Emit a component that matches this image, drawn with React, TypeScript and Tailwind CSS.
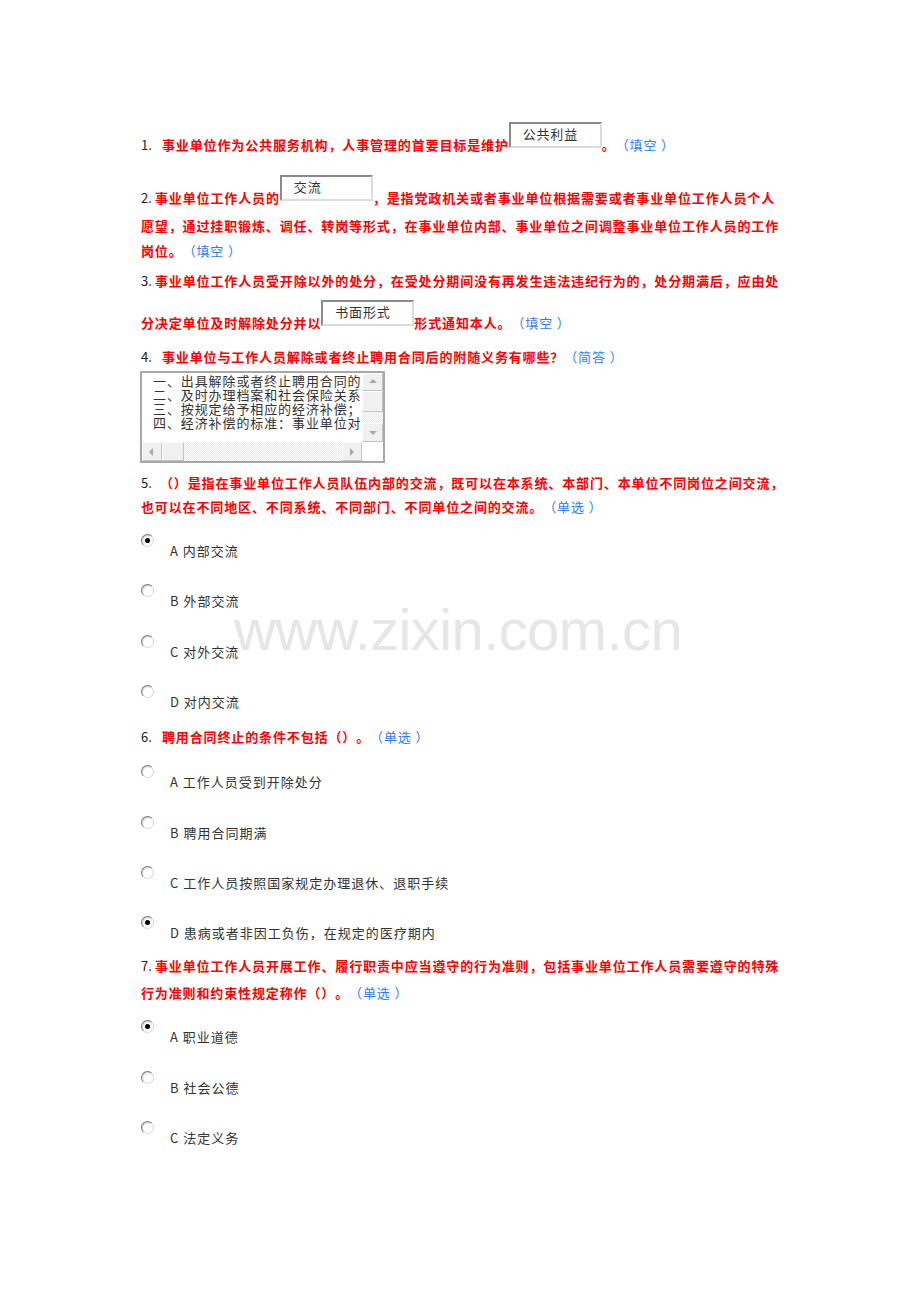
import React from "react";

const FONT = { fontFamily: '"Noto Sans CJK SC", "Liberation Sans", sans-serif' };

function Box({ text }: { text: string }) {
  return (
    <div className="w-[93px] h-[26px] mb-[4px] shrink-0 border-2 border-t-[#8a8a8a] border-l-[#8a8a8a] border-b-[#dcdcdc] border-r-[#dcdcdc] bg-white pl-[12px] pt-[2px] text-[13px] leading-[16px] font-normal text-[#333] tracking-[0.8px] whitespace-nowrap overflow-hidden">
      {text}
    </div>
  );
}

function Red({ children }: { children: React.ReactNode }) {
  return <span className="text-[#ff0000] font-bold">{children}</span>;
}

function Blue({ children }: { children: React.ReactNode }) {
  return <span className="text-[#2f7cf6] font-normal">{children}</span>;
}

function Num({ n, wide }: { n: string; wide?: boolean }) {
  return (
    <span className={wide ? "inline-block w-[21px] text-[#222] tracking-normal" : "inline-block w-[14px] text-[#222] tracking-normal"}>
      {n}
    </span>
  );
}

function Radio({ checked, label, className }: { checked?: boolean; label: string; className: string }) {
  return (
    <div className={"flex items-start h-[24px] " + className}>
      <div className="w-[13px] h-[13px] rounded-full border border-t-[#7a7a7a] border-l-[#7a7a7a] border-b-[#d8d8d8] border-r-[#d8d8d8] bg-white shadow-[inset_1px_1px_1px_rgba(0,0,0,0.18)] flex items-center justify-center shrink-0">
        {checked ? <div className="w-[5px] h-[5px] rounded-full bg-black" /> : null}
      </div>
      <div className="ml-[16px] mt-[10px] text-[13px] leading-[14px] text-[#333] tracking-[1px] whitespace-nowrap">
        {label}
      </div>
    </div>
  );
}

function Arrow({ dir }: { dir: "up" | "down" | "left" | "right" }) {
  const pts =
    dir === "up"
      ? "1,6 5,2 9,6"
      : dir === "down"
      ? "1,3 5,7 9,3"
      : dir === "left"
      ? "6,1 2,5 6,9"
      : "3,1 7,5 3,9";
  return (
    <svg width="10" height="10" viewBox="0 0 10 10">
      <polygon points={pts} fill="#a8a8a8" />
    </svg>
  );
}

function SBtn({ dir, className }: { dir?: "up" | "down" | "left" | "right"; className: string }) {
  return (
    <div className={"bg-[#f0f0f0] border border-t-[#fdfdfd] border-l-[#fdfdfd] border-b-[#c4c4c4] border-r-[#c4c4c4] flex items-center justify-center " + className}>
      {dir ? <Arrow dir={dir} /> : null}
    </div>
  );
}

function TextArea() {
  const lines = [
    "一、出具解除或者终止聘用合同的书面证明；",
    "二、及时办理档案和社会保险关系转移手续；",
    "三、按规定给予相应的经济补偿；",
    "四、经济补偿的标准：事业单位对工作人员",
  ];
  return (
    <div className="mt-[2px] w-[245px] h-[92px] border-2 border-[#a8a8a8] bg-white grid grid-cols-[220px_21px] grid-rows-[69px_19px] ml-[-1px]">
      <div className="overflow-hidden pl-[11px] pt-[1px] text-[13px] leading-[14px] text-[#333] tracking-[0.9px] whitespace-nowrap">
        {lines.map((l) => (
          <div key={l} className="h-[14px]">{l}</div>
        ))}
      </div>
      <div className="flex flex-col">
        <SBtn dir="up" className="h-[18px]" />
        <SBtn className="h-[21px]" />
        <div className="flex-1 bg-[repeating-conic-gradient(#ececec_0%_25%,#fafafa_0%_50%)] bg-[length:2px_2px]" />
        <SBtn dir="down" className="h-[19px]" />
      </div>
      <div className="flex">
        <SBtn dir="left" className="w-[20px]" />
        <SBtn className="w-[22px]" />
        <div className="flex-1 bg-[repeating-conic-gradient(#ececec_0%_25%,#fafafa_0%_50%)] bg-[length:2px_2px]" />
        <SBtn dir="right" className="w-[20px]" />
      </div>
      <div className="bg-white" />
    </div>
  );
}

export default function App() {
  return (
    <div className="relative w-[920px] h-[1302px] bg-white overflow-hidden [text-spacing-trim:space-all]" style={FONT}>
      <div className="pt-[122px] pl-[141px] text-[13px] tracking-[0.87px]">
        {/* Q1 */}
        <div className="flex items-end h-[30px] whitespace-nowrap">
          <span className="leading-[14px]">
            <Num n="1." wide />
            <Red>事业单位作为公共服务机构，人事管理的首要目标是维护</Red>
          </span>
          <Box text="公共利益" />
          <span className="leading-[14px]">
            <Red>。</Red>
            <Blue>（填空 ）</Blue>
          </span>
        </div>
        {/* Q2 */}
        <div className="mt-[23px] flex items-end h-[30px] whitespace-nowrap">
          <span className="leading-[14px]">
            <Num n="2." />
            <Red>事业单位工作人员的</Red>
          </span>
          <Box text="交流" />
          <span className="leading-[14px]">
            <Red>，是指党政机关或者事业单位根据需要或者事业单位工作人员个人</Red>
          </span>
        </div>
        <div className="mt-[9px] leading-[24px] whitespace-nowrap">
          <Red>愿望，通过挂职锻炼、调任、转岗等形式，在事业单位内部、事业单位之间调整事业单位工作人员的工作</Red>
        </div>
        <div className="mt-[1px] leading-[24px] whitespace-nowrap">
          <Red>岗位。</Red>
          <Blue>（填空 ）</Blue>
        </div>
        {/* Q3 */}
        <div className="mt-[6px] leading-[24px] whitespace-nowrap">
          <Num n="3." />
          <Red>事业单位工作人员受开除以外的处分，在受处分期间没有再发生违法违纪行为的，处分期满后，应由处</Red>
        </div>
        <div className="mt-[7px] flex items-end h-[30px] whitespace-nowrap">
          <span className="leading-[14px]">
            <Red>分决定单位及时解除处分并以</Red>
          </span>
          <Box text="书面形式" />
          <span className="leading-[14px]">
            <Red>形式通知本人。</Red>
            <Blue>（填空 ）</Blue>
          </span>
        </div>
        {/* Q4 */}
        <div className="mt-[15px] leading-[24px] whitespace-nowrap">
          <Num n="4." wide />
          <Red>事业单位与工作人员解除或者终止聘用合同后的附随义务有哪些？</Red>
          <Blue>（简答 ）</Blue>
        </div>
        <TextArea />
        {/* Q5 */}
        <div className="mt-[8px] leading-[24px] whitespace-nowrap">
          <span className="inline-block w-[19px] text-[#222] tracking-normal">5.</span>
          <Red>（）是指在事业单位工作人员队伍内部的交流，既可以在本系统、本部门、本单位不同岗位之间交流，</Red>
        </div>
        <div className="leading-[24px] whitespace-nowrap">
          <Red>也可以在不同地区、不同系统、不同部门、不同单位之间的交流。</Red>
          <Blue>（单选 ）</Blue>
        </div>
        <Radio checked label="A 内部交流" className="mt-[15px]" />
        <Radio label="B 外部交流" className="mt-[26px]" />
        <Radio label="C 对外交流" className="mt-[27px]" />
        <Radio label="D 对内交流" className="mt-[26px]" />
        {/* Q6 */}
        <div className="mt-[16px] leading-[24px] whitespace-nowrap">
          <Num n="6." wide />
          <Red>聘用合同终止的条件不包括（）。</Red>
          <Blue>（单选 ）</Blue>
        </div>
        <Radio label="A 工作人员受到开除处分" className="mt-[16px]" />
        <Radio label="B 聘用合同期满" className="mt-[27px]" />
        <Radio label="C 工作人员按照国家规定办理退休、退职手续" className="mt-[26px]" />
        <Radio checked label="D 患病或者非因工负伤，在规定的医疗期内" className="mt-[26px]" />
        {/* Q7 */}
        <div className="mt-[14px] leading-[24px] whitespace-nowrap">
          <Num n="7." />
          <Red>事业单位工作人员开展工作、履行职责中应当遵守的行为准则，包括事业单位工作人员需要遵守的特殊</Red>
        </div>
        <div className="mt-[3px] leading-[24px] whitespace-nowrap">
          <Red>行为准则和约束性规定称作（）。</Red>
          <Blue>（单选 ）</Blue>
        </div>
        <Radio checked label="A 职业道德" className="mt-[15px]" />
        <Radio label="B 社会公德" className="mt-[27px]" />
        <Radio label="C 法定义务" className="mt-[26px]" />
      </div>
      <div
        className="absolute left-[234px] top-[601px] text-[58px] leading-none tracking-[-0.6px] text-[#e6e6e6] whitespace-nowrap pointer-events-none"
        style={{ fontFamily: '"Liberation Sans", Arial, sans-serif' }}
      >
        www.zixin.com.cn
      </div>
    </div>
  );
}
